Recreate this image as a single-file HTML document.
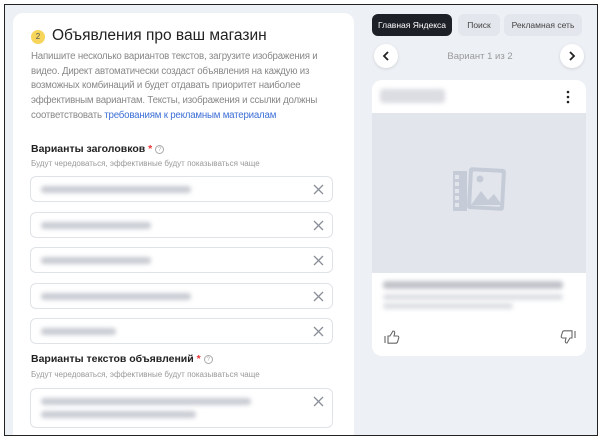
<!DOCTYPE html>
<html><head><meta charset="utf-8"><style>
*{box-sizing:border-box;margin:0;padding:0}
body{width:600px;height:444px;background:#fff;font-family:"Liberation Sans","DejaVu Sans",sans-serif;position:relative;overflow:hidden}
.frame{position:absolute;left:4px;top:4px;width:594px;height:432px;border:1.5px solid #222;background:#edf0f5;overflow:hidden}
.left{position:absolute;left:8px;top:8px;width:341px;height:440px;background:#fff;border-radius:10px}
.abs{position:absolute}
.blur{position:absolute;background:#c9ccd3;filter:blur(2px);border-radius:3px}
.inp{position:absolute;left:17px;width:303px;height:26px;border:1px solid #dfe2e7;border-radius:6px;background:#fff}
.x{position:absolute;right:8px;top:7px}
.lbl{font-size:10.5px;font-weight:bold;color:#222}
.sub{font-size:8px;color:#999}
.q{display:inline-block;width:9px;height:9px;border:1px solid #aaa;border-radius:50%;font-size:6px;text-align:center;line-height:8px;color:#aaa;vertical-align:1px;margin-left:3px;font-weight:normal}
.tab{position:absolute;top:9px;height:22px;border-radius:6px;font-size:8.5px;line-height:22px;text-align:center;background:#e3e6ec;color:#444}
.circ{position:absolute;width:24px;height:24px;border-radius:50%;background:#fff;box-shadow:0 1px 3px rgba(0,0,0,.12)}
</style></head><body>
<svg width="0" height="0" style="position:absolute"><defs><g id="x"><path d="M1 1L10 10M10 1L1 10" stroke="#8a8f99" stroke-width="1.3"/></g></defs></svg>
<div class="frame">
<div class="left">
 <div class="abs" style="left:18px;top:17px;width:14px;height:14px;border-radius:50%;background:#f7d55b;font-size:8px;text-align:center;line-height:14px;color:#555">2</div>
 <div class="abs" style="left:39px;top:14px;font-size:15.5px;color:#222">Объявления про ваш магазин</div>
 <div class="abs" style="left:18px;top:37px;width:296px;font-size:9.7px;letter-spacing:-0.2px;line-height:14.7px;color:#888">Напишите несколько вариантов текстов, загрузите изображения и видео. Директ автоматически создаст объявления на каждую из возможных комбинаций и будет отдавать приоритет наиболее эффективным вариантам. Тексты, изображения и ссылки должны соответствовать <span style="color:#3d6fd6">требованиям к рекламным материалам</span></div>
 <div class="abs lbl" style="left:18px;top:130px">Варианты заголовков <span style="color:#e33">*</span><span class="q">?</span></div>
 <div class="abs sub" style="left:18px;top:146px">Будут чередоваться, эффективные будут показываться чаще</div>
 <div class="inp" style="top:163px"><div class="blur" style="left:10px;top:9px;width:150px;height:7px"></div><svg class="x" width="11" height="11"><use href="#x"/></svg></div>
 <div class="inp" style="top:199px"><div class="blur" style="left:10px;top:9px;width:110px;height:7px"></div><svg class="x" width="11" height="11"><use href="#x"/></svg></div>
 <div class="inp" style="top:234px"><div class="blur" style="left:10px;top:9px;width:110px;height:7px"></div><svg class="x" width="11" height="11"><use href="#x"/></svg></div>
 <div class="inp" style="top:270px"><div class="blur" style="left:10px;top:9px;width:150px;height:7px"></div><svg class="x" width="11" height="11"><use href="#x"/></svg></div>
 <div class="inp" style="top:305px"><div class="blur" style="left:10px;top:9px;width:75px;height:7px"></div><svg class="x" width="11" height="11"><use href="#x"/></svg></div>
 <div class="abs lbl" style="left:18px;top:340px">Варианты текстов объявлений <span style="color:#e33">*</span><span class="q">?</span></div>
 <div class="abs sub" style="left:18px;top:357px">Будут чередоваться, эффективные будут показываться чаще</div>
 <div class="inp" style="top:375px;height:40px"><div class="blur" style="left:10px;top:9px;width:210px;height:7px"></div><div class="blur" style="left:10px;top:22px;width:155px;height:7px"></div><svg class="x" width="11" height="11"><use href="#x"/></svg></div>
</div>
<div class="tab" style="left:367px;width:80px;background:#1e2028;color:#fff">Главная Яндекса</div>
<div class="tab" style="left:453px;width:42px">Поиск</div>
<div class="tab" style="left:499px;width:78px">Рекламная сеть</div>
<div class="circ" style="left:369px;top:39px"><svg width="24" height="24"><path d="M14 8l-4 4 4 4" stroke="#222" stroke-width="1.8" fill="none"/></svg></div>
<div class="circ" style="left:555px;top:39px"><svg width="24" height="24"><path d="M10 8l4 4-4 4" stroke="#222" stroke-width="1.8" fill="none"/></svg></div>
<div class="abs" style="left:420px;top:46px;width:110px;text-align:center;font-size:9.5px;color:#999">Вариант 1 из 2</div>
<div class="abs" style="left:367px;top:75px;width:214px;height:276px;background:#fff;border-radius:10px;overflow:hidden">
 <div class="blur" style="left:8px;top:9px;width:65px;height:14px;background:#dcdde2"></div>
 <svg class="abs" style="left:193px;top:10px" width="6" height="14"><circle cx="3" cy="2" r="1.3" fill="#222"/><circle cx="3" cy="7" r="1.3" fill="#222"/><circle cx="3" cy="12" r="1.3" fill="#222"/></svg>
 <div class="abs" style="left:0;top:33px;width:214px;height:160px;background:#e2e6ec">
  <svg class="abs" style="left:79px;top:54px" width="56" height="45" viewBox="0 0 56 45">
   <path d="M2 4h14v40H2z" fill="#c5ccd8"/>
   <g fill="#e2e6ec"><rect x="4" y="8" width="4" height="4"/><rect x="4" y="15" width="4" height="4"/><rect x="4" y="22" width="4" height="4"/><rect x="4" y="29" width="4" height="4"/><rect x="4" y="36" width="4" height="4"/></g>
   <rect x="17" y="1" width="37" height="42" rx="3" fill="#c5ccd8" transform="rotate(3 35 22)"/>
   <rect x="21" y="5" width="29" height="34" rx="1" fill="#e2e6ec" transform="rotate(3 35 22)"/>
   <circle cx="29" cy="12" r="3.5" fill="#c5ccd8"/>
   <path d="M20 38l10-14 7 9 6-6 8 11z" fill="#c5ccd8"/>
  </svg>
 </div>
 <div class="blur" style="left:11px;top:201px;width:180px;height:8px;background:#c0c3ca"></div>
 <div class="blur" style="left:11px;top:214px;width:180px;height:6px;background:#dcdee3"></div>
 <div class="blur" style="left:11px;top:223px;width:130px;height:6px;background:#dcdee3"></div>
 <svg class="abs" style="left:12px;top:249px" width="16" height="16" viewBox="0 0 16 16"><path d="M1 7v7M4 7h2l3-5c1.5 0 2 1 1.6 2.5L10 7h3.5c1 0 1.5 1 1.2 2l-1.2 4c-.3.8-1 1.2-1.8 1.2H4z" fill="none" stroke="#666" stroke-width="1.1"/></svg>
 <svg class="abs" style="left:188px;top:249px" width="16" height="16" viewBox="0 0 16 16"><path d="M15 9V2M12 9h-2l-3 5c-1.5 0-2-1-1.6-2.5L6 9H2.5c-1 0-1.5-1-1.2-2l1.2-4c.3-.8 1-1.2 1.8-1.2H12z" fill="none" stroke="#666" stroke-width="1.1"/></svg>
</div>
</div>
</body></html>
